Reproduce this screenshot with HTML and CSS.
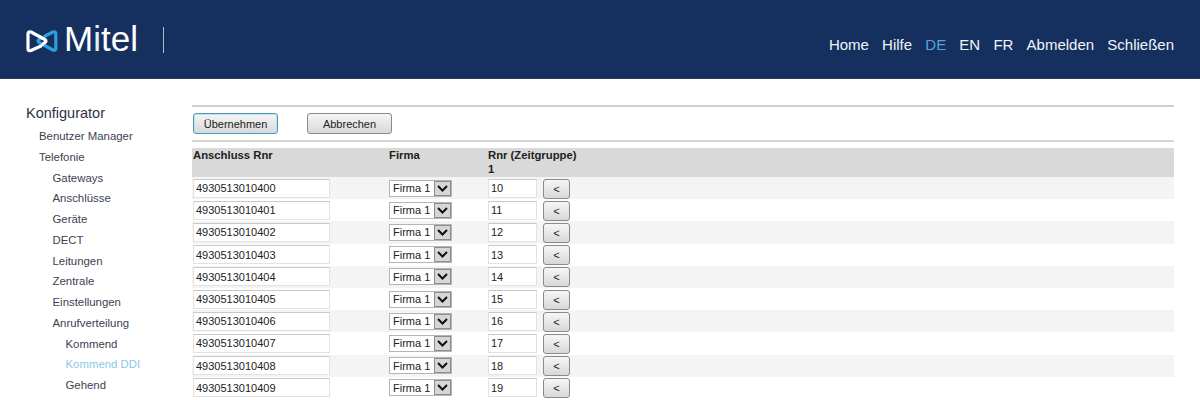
FILE: index.html
```html
<!DOCTYPE html>
<html lang="de">
<head>
    <meta charset="UTF-8">
    <title>Mitel Konfigurator</title>
    <link rel="stylesheet" href="styles.css">
</head>
<body>
    <header class="topbar">
        <div class="logo">
            <svg class="logo-icon" width="32" height="24" viewBox="0 0 32 24" fill="none" stroke-width="3.200" stroke-linejoin="round" stroke-linecap="round">
                <path d="M19 7 L27 3 Q29.800 2 29.800 5 L29.800 19 Q29.800 22 27 21 L13 13.500 Q11 12 13 10.500 L15 9.500" stroke="#2f9fdc"/>
                <path d="M15 17 L5 21.500 Q2 22.500 2 19.500 L2 5 Q2 2 5 3 L19 10.500 Q21 12 19 13.500 L17 15" stroke="#ffffff"/>
            </svg>
            <span class="logo-text">M<span class="logo-i">i</span>tel</span>
            <span class="logo-sep"></span>
        </div>
        <nav class="topnav">
            <a href="#">Home</a>
            <a href="#">Hilfe</a>
            <a href="#" class="active">DE</a>
            <a href="#">EN</a>
            <a href="#">FR</a>
            <a href="#">Abmelden</a>
            <a href="#">Schließen</a>
        </nav>
    </header>

    <div class="page">
        <aside class="sidebar">
            <h3>Konfigurator</h3>
            <ul>
                <li>Benutzer Manager</li>
                <li>Telefonie</li>
                <li class="sub">Gateways</li>
                <li class="sub">Anschlüsse</li>
                <li class="sub">Geräte</li>
                <li class="sub">DECT</li>
                <li class="sub">Leitungen</li>
                <li class="sub">Zentrale</li>
                <li class="sub">Einstellungen</li>
                <li class="sub">Anrufverteilung</li>
                <li class="sub2">Kommend</li>
                <li class="sub2 current">Kommend DDI</li>
                <li class="sub2">Gehend</li>
            </ul>
        </aside>

        <main class="content">
            <div class="toolbar">
                <button type="button" class="btn btn-default">Übernehmen</button>
                <button type="button" class="btn">Abbrechen</button>
            </div>
            <table class="ddi-table">
                <thead>
                    <tr>
                        <th class="col-number">Anschluss Rnr</th>
                        <th class="col-company">Firma</th>
                        <th class="col-target">Rnr (Zeitgruppe)<br>1</th>
                        <th></th>
                    </tr>
                </thead>
                <tbody id="rows"></tbody>
            </table>
        </main>
    </div>

    <script>
        const rows = document.getElementById('rows');

        for (let i = 0; i < 10; i++) {
            const tr = document.createElement('tr');
            tr.innerHTML = `
                <td><input type="text" class="field field-number" value="493051301040${i}"></td>
                <td>
                    <span class="fake-select">
                        <span class="fake-select-text">Firma 1</span>
                        <span class="fake-select-arrow">
                            <svg width="11" height="7" viewBox="0 0 11 7" fill="none" stroke="#111" stroke-width="2"><path d="M1 1 L5.500 5.500 L10 1"/></svg>
                        </span>
                    </span>
                </td>
                <td><input type="text" class="field field-target" value="${10 + i}"></td>
                <td><button type="button" class="btn btn-small">&lt;</button></td>`;
            rows.appendChild(tr);
        }
    </script>
</body>
</html>
```

FILE: styles.css
```css
* {
    box-sizing: border-box;
}
body {
    margin: 0;
    height: 400px;
    overflow: hidden;
    background: #fff;
    font-family: "Liberation Sans", Arial, sans-serif;
    color: #333;
}
.topbar {
    height: 79px;
    background: #15305f;
    border-bottom: 1px solid #2b3a4e;
    display: flex;
    justify-content: space-between;
    padding: 0 26px;
}
.logo {
    display: flex;
    align-items: flex-start;
    padding-top: 26px;
}
.logo-icon {
    margin-top: 3px;
    margin-right: 6px;
}
.logo-text {
    font-size: 35px;
    line-height: 26px;
    color: #fff;
}
.logo-i {
    color: #dff1fb;
}
.logo-sep {
    width: 1px;
    height: 26px;
    margin-top: 1px;
    margin-left: 25px;
    background: #a9bccf;
}
.topnav {
    display: flex;
    gap: 13.200px;
    padding-top: 36px;
}
.topnav a {
    color: #f2f5f8;
    text-decoration: none;
    line-height: 18px;
    font-size: 15px;
}
.topnav a.active {
    color: #58a3de;
}
.page {
    display: flex;
    padding: 26px 26px 0;
}
.sidebar {
    width: 166px;
    flex: none;
}
.sidebar h3 {
    margin: 0;
    font-size: 14.500px;
    font-weight: normal;
    line-height: 17px;
    color: #2c3446;
}
.sidebar ul {
    list-style: none;
    margin: 4px 0 0;
    padding: 0 0 0 13px;
    font-size: 11.400px;
    color: #3b4252;
}
.sidebar li {
    height: 20.750px;
    line-height: 20.750px;
    white-space: nowrap;
}
.sidebar .sub {
    padding-left: 13.500px;
}
.sidebar .sub2 {
    padding-left: 26.500px;
}
.sidebar .current {
    color: #8cc8ea;
}
.content {
    flex: 1;
}
.toolbar {
    height: 37px;
    display: flex;
    gap: 29px;
    padding: 6px 0 0 1px;
    border-top: 2px solid #cfcfcf;
    border-bottom: 2px solid #d6d6d6;
}
.btn {
    width: 85px;
    height: 21px;
    padding: 0;
    font-family: inherit;
    font-size: 11px;
    color: #222;
    border: 1px solid #8a8a8a;
    border-radius: 3px;
    background: linear-gradient(#f6f6f6, #d8d8d8);
}
.btn-default {
    border-color: #4d98b4;
    box-shadow: inset 0 0 0 1px #bfe3f0;
}
.btn-small {
    display: block;
    width: 27px;
    height: 20px;
    margin-top: 1px;
    font-size: 11px;
}
.ddi-table {
    width: 100%;
    margin-top: 6px;
    border-collapse: collapse;
    table-layout: fixed;
    font-size: 11px;
}
.ddi-table th {
    height: 29px;
    padding: 0 0 0 1px;
    background: #d9d9d9;
    text-align: left;
    vertical-align: top;
    line-height: 14px;
    font-size: 11.300px;
    color: #222;
    white-space: nowrap;
}
.col-number {
    width: 196px;
}
.col-company {
    width: 99px;
}
.col-target {
    width: 55px;
}
.ddi-table td {
    height: 22.200px;
    padding: 0 0 0 1px;
    vertical-align: middle;
}
.ddi-table tbody tr:nth-child(odd) {
    background: #f4f4f4;
}
.field {
    display: block;
    height: 19px;
    padding: 0 2px;
    font-family: inherit;
    font-size: 11px;
    color: #222;
    background: #fff;
    border: 1px solid #e2e2e2;
    border-top-color: #c9c9c9;
    outline: none;
}
.field-number {
    width: 137px;
}
.field-target {
    width: 49px;
}
.fake-select {
    display: inline-flex;
    align-items: center;
    width: 63px;
    height: 17px;
    vertical-align: middle;
    background: #fff;
    border: 1px solid #b5b5b5;
}
.fake-select-text {
    flex: 1;
    padding-left: 3px;
    font-size: 11px;
    color: #222;
}
.fake-select-arrow {
    width: 17px;
    height: 15px;
    display: flex;
    align-items: center;
    justify-content: center;
    background: #d6d6d6;
    border: 1px solid #8d8d8d;
}
```
